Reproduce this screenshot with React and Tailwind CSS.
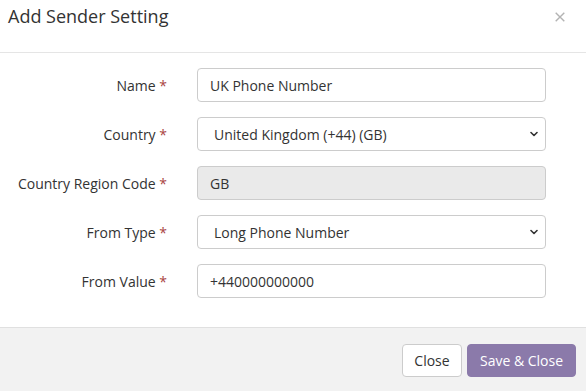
import React from "react";

function Chevron() {
  return (
    <svg
      className="pointer-events-none absolute right-[8px] top-1/2 -translate-y-1/2"
      width="8"
      height="6"
      viewBox="0 0 8 6"
      fill="none"
    >
      <path d="M1 1.5L4 4.5L7 1.5" stroke="#333" strokeWidth="1.6" strokeLinecap="round" strokeLinejoin="round" />
    </svg>
  );
}

function Label({ children }) {
  return (
    <label className="w-[167px] shrink-0 text-right text-[14px] text-[#333]">
      {children} <span className="text-[#a94442]">*</span>
    </label>
  );
}

function Row({ label, children }) {
  return (
    <div className="flex items-center h-[34px]">
      <Label>{label}</Label>
      <div className="ml-[30px] w-[349px] h-[34px] relative">{children}</div>
    </div>
  );
}

const inputCls =
  "w-full h-full rounded-[4px] border border-[#ccc] bg-white px-[12px] text-[14px] text-[#333] outline-none";
const selectCls =
  "w-full h-full rounded-[4px] border border-[#ccc] bg-white pl-[16px] pr-[24px] text-[14px] text-[#333] outline-none appearance-none";

export default function App() {
  return (
    <div
      className="w-[586px] h-[391px] bg-white flex flex-col text-[#333]"
      style={{ fontFamily: '"Open Sans", "Noto Sans", sans-serif' }}
    >
      <div className="h-[53px] shrink-0 border-b border-[#e5e5e5] flex justify-between items-start pl-[8px] pr-[21px] pt-[3px]">
        <h4 className="text-[18px] leading-[27px] text-[#333]">Add Sender Setting</h4>
        <svg className="mt-[9px]" width="10" height="10" viewBox="0 0 10 10" fill="none">
          <path d="M0.7 0.7L9.3 9.3M9.3 0.7L0.7 9.3" stroke="#b3b3b3" strokeWidth="1.4" />
        </svg>
      </div>
      <div className="flex-1 flex flex-col gap-[15px] pt-[15px]">
        <Row label="Name">
          <input className={inputCls} defaultValue="UK Phone Number" />
        </Row>
        <Row label="Country">
          <select className={selectCls} defaultValue="gb">
            <option value="gb">United Kingdom (+44) (GB)</option>
          </select>
          <Chevron />
        </Row>
        <Row label="Country Region Code">
          <input
            className="w-full h-full rounded-[4px] border border-[#ccc] bg-[#eaeaea] px-[12px] text-[14px] text-[#333] outline-none"
            defaultValue="GB"
            disabled
          />
        </Row>
        <Row label="From Type">
          <select className={selectCls} defaultValue="long">
            <option value="long">Long Phone Number</option>
          </select>
          <Chevron />
        </Row>
        <Row label="From Value">
          <input className={inputCls} defaultValue="+440000000000" />
        </Row>
      </div>
      <div className="h-[64px] shrink-0 border-t border-[#e0e0e0] bg-[#f2f2f2] flex justify-end items-start pt-[16px] pr-[10px] gap-[5px]">
        <button className="h-[33px] w-[60px] rounded-[4px] border border-[#ccc] bg-white text-[14px] text-[#333]">
          Close
        </button>
        <button className="h-[33px] w-[109px] rounded-[4px] border border-[#8b7aaa] bg-[#8b7aaa] text-[14px] text-white">
          Save &amp; Close
        </button>
      </div>
    </div>
  );
}
